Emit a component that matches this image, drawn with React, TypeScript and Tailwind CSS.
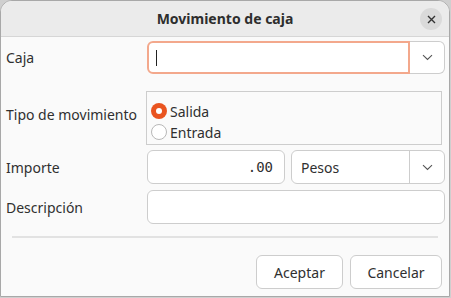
import React from "react";

const Chevron = () => (
  <svg width="11" height="7" viewBox="0 0 11 7" fill="none">
    <path d="M1 1.2 L5.5 5.5 L10 1.2" stroke="#555" strokeWidth="1.1" />
  </svg>
);

export default function App() {
  return (
    <div
      className="w-[451px] h-[298px] bg-[#cfcfcf] overflow-hidden"
      style={{ fontFamily: '"Noto Sans", "DejaVu Sans", sans-serif' }}
    >
      <div className="w-[450px] h-[297px] bg-[#fafafa] border border-[#a8a8a8] rounded-t-[12px] flex flex-col overflow-hidden text-[#303030]">
        {/* header */}
        <div className="h-[36px] shrink-0 bg-[#ebebeb] border-b border-[#d6d6d6] relative flex items-center justify-center">
          <span className="text-[14px] font-bold text-[#2e2e2e]">Movimiento de caja</span>
          <div className="absolute right-[7px] top-[7px] w-[22px] h-[22px] rounded-full bg-[#dadada] flex items-center justify-center">
            <svg width="9" height="9" viewBox="0 0 9 9">
              <path d="M1 1 L8 8 M8 1 L1 8" stroke="#333" strokeWidth="1.4" />
            </svg>
          </div>
        </div>

        {/* body */}
        <div className="flex-1 flex flex-col pl-[5px] pr-[4px] text-[14px]">
          {/* Caja */}
          <div className="flex items-center mt-[4px] h-[33px]">
            <div className="w-[141px]">Caja</div>
            <div className="flex-1 flex h-[33px]">
              <div className="flex-1 border-2 border-[#f3a88c] rounded-l-[6px] bg-white flex items-center pl-[7px]">
                <div className="w-[1px] h-[16px] bg-[#222]" />
              </div>
              <div className="w-[35px] border border-l-0 border-[#cdcdcd] rounded-r-[6px] bg-white flex items-center justify-center">
                <Chevron />
              </div>
            </div>
          </div>

          {/* Tipo */}
          <div className="flex items-center mt-[17px]">
            <div className="w-[140px] pb-[7px]">Tipo de movimiento</div>
            <div className="flex-1 h-[54px] border border-[#cdcdcd] bg-[#fafafa] mr-[3px] flex flex-col pt-[10px] pl-[4px] gap-[3px]">
              <div className="flex items-center gap-[3px] h-[18px]">
                <div className="w-[16px] h-[16px] rounded-full bg-[#e95420] flex items-center justify-center">
                  <div className="w-[6px] h-[6px] rounded-full bg-white" />
                </div>
                <span>Salida</span>
              </div>
              <div className="flex items-center gap-[3px] h-[18px]">
                <div className="w-[16px] h-[16px] rounded-full bg-white border border-[#b8b8b8]" />
                <span>Entrada</span>
              </div>
            </div>
          </div>

          {/* Importe */}
          <div className="flex items-center mt-[5px] h-[34px]">
            <div className="w-[141px]">Importe</div>
            <div className="w-[138px] h-[34px] border border-[#cdcdcd] rounded-[6px] bg-white flex items-center justify-end pr-[11px]">
              <span style={{ fontFamily: '"DejaVu Sans Mono", monospace' }} className="text-[14px]">.00</span>
            </div>
            <div className="flex-1 flex h-[34px] ml-[6px] border border-[#cdcdcd] rounded-[6px] bg-white">
              <div className="flex-1 flex items-center pl-[9px]">Pesos</div>
              <div className="w-[35px] border-l border-[#cdcdcd] flex items-center justify-center">
                <Chevron />
              </div>
            </div>
          </div>

          {/* Descripcion */}
          <div className="flex items-center mt-[6px] h-[34px]">
            <div className="w-[141px]">Descripción</div>
            <div className="flex-1 h-[34px] border border-[#cdcdcd] rounded-[6px] bg-white" />
          </div>

          {/* separator */}
          <div className="mt-[12px] ml-[6px] mr-[7px] h-[2px] bg-[#e2e2e2]" />

          {/* buttons */}
          <div className="flex justify-end gap-[7px] mt-[17px] pr-[3px]">
            <div className="w-[87px] h-[34px] border border-[#cdcdcd] rounded-[6px] bg-white flex items-center justify-center">Aceptar</div>
            <div className="w-[92px] h-[34px] border border-[#cdcdcd] rounded-[6px] bg-white flex items-center justify-center">Cancelar</div>
          </div>
        </div>
      </div>
    </div>
  );
}
